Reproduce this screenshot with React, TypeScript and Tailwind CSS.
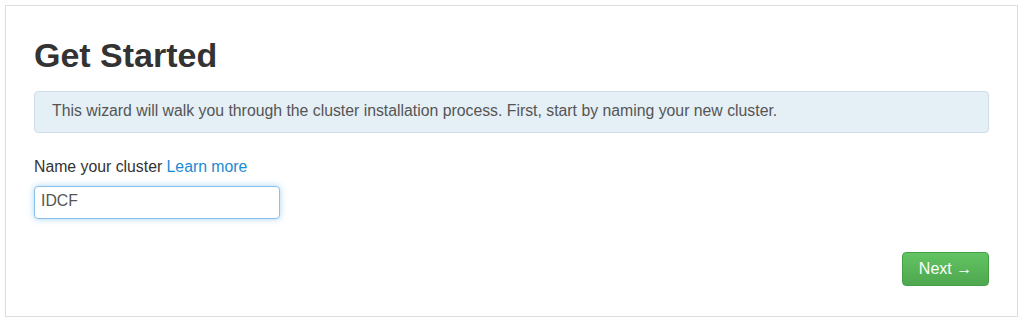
export default function App() {
  return (
    <div className="w-[1024px] h-[322px] bg-white pt-[5px] pl-[5px]" style={{ fontFamily: '"Liberation Sans", Arial, sans-serif' }}>
      <div className="w-[1013px] h-[312px] border border-[#dddddd] bg-white px-[28px] pt-[30px]">
        <h1 className="text-[34px] leading-[38px] font-bold text-[#333333] m-0">Get Started</h1>
        <div className="mt-[17px] h-[42px] rounded-[4px] border border-[#cfdde8] bg-[#e5eff6] pl-[17px] pt-[9px] text-[15.8px] leading-[20px] text-[#555555]">
          This wizard will walk you through the cluster installation process. First, start by naming your new cluster.
        </div>
        <div className="mt-[24px] text-[15.8px] leading-[20px] text-[#333333]">
          Name your cluster <a className="text-[#1b8bd4]">Learn more</a>
        </div>
        <div className="mt-[9px] w-[246px] h-[33px] rounded-[4px] border border-[#8cc0ec] bg-white px-[6px] pt-[4px] text-[15.8px] leading-[20px] text-[#555555] shadow-[0_0_6px_rgba(82,168,236,0.5)]">
          IDCF
        </div>
        <div className="flex justify-end mt-[33px]">
          <button className="w-[87px] h-[34px] rounded-[4px] border border-[#45a045] bg-gradient-to-b from-[#62c462] to-[#4fa74f] text-white text-[16px] leading-[20px]">
            Next →
          </button>
        </div>
      </div>
    </div>
  );
}
